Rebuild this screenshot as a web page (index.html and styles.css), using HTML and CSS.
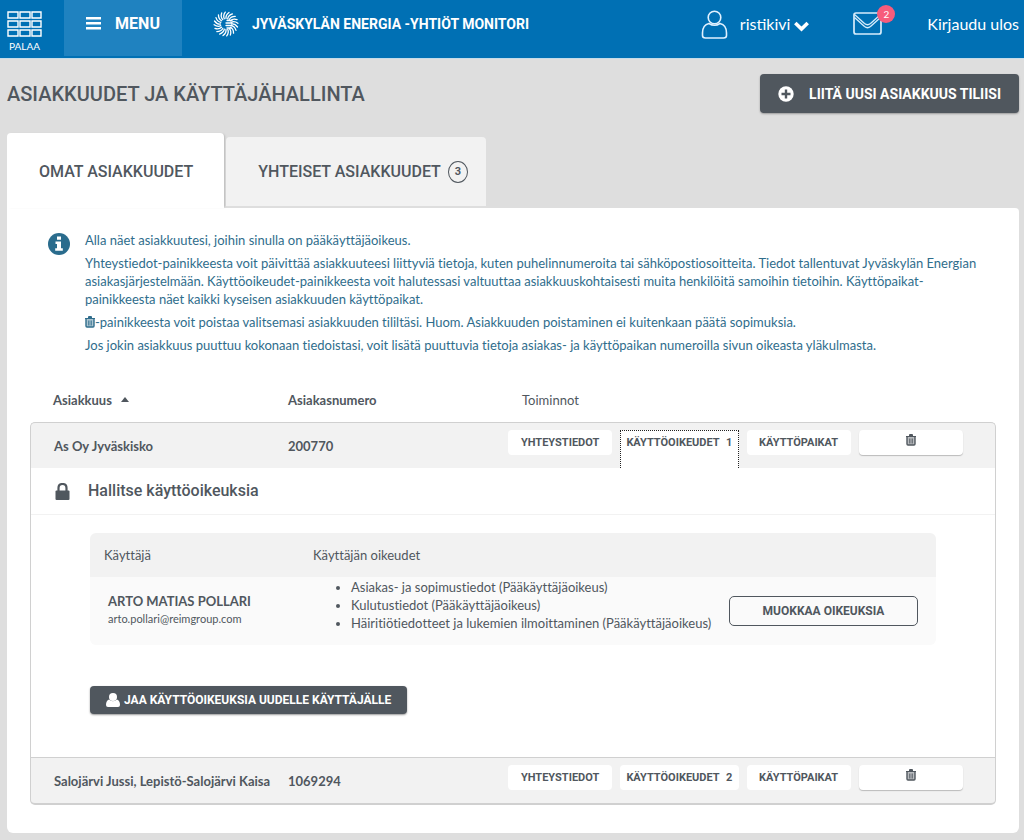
FILE: index.html
```html
<!DOCTYPE html>
<html lang="fi">
<head>
<meta charset="utf-8">
<meta name="viewport" content="width=device-width, initial-scale=1">
<title>Asiakkuudet ja käyttäjähallinta</title>
<link rel="stylesheet" href="styles.css">
</head>
<body>
<svg class="symbols" aria-hidden="true">
  <symbol id="trash" viewBox="0 0 10 12">
    <path d="M0 2h3V1q0-1 1-1h2q1 0 1 1v1h3v1H0z" fill="currentColor"/>
    <path d="M1 3v7q0 1 1 1h6q1 0 1-1V3" fill="currentColor" fill-opacity=".4" stroke="currentColor" stroke-width="1.4"/>
    <path d="M3.5 4.500v5M5 4.500v5M6.500 4.500v5" stroke="currentColor" stroke-width=".7"/>
  </symbol>
</svg>

<header class="topbar">
  <a class="back" href="#">
    <svg width="36" height="27" viewBox="0 0 36 27" fill="none" stroke="#fff" stroke-width="1.4" aria-hidden="true">
      <path d="M1 1h10v6H1zM13 1h10v6H13zM25 1h9v6h-9zM1 10h10v6H1zM13 10h10v6H13zM25 10h9v6h-9zM1 19h10v6H1zM13 19h10v6H13zM25 19h9v6h-9z"/>
    </svg>
    <span>PALAA</span>
  </a>
  <button class="menu" type="button">
    <svg width="15" height="13" viewBox="0 0 15 13" fill="#fff" aria-hidden="true"><path d="M0 0h15v2.500H0zM0 5h15v2.500H0zM0 10h15v2.500H0z"/></svg>
    MENU
  </button>
  <div class="brand">
    <svg width="26" height="26" viewBox="-13 -13 26 26" fill="none" stroke="#fff" stroke-width="1.300" stroke-linecap="round" aria-hidden="true">
      <defs>
        <path id="ray" d="M0-5.500Q-.5-9 3-11.500"/>
        <g id="quarter">
          <use href="#ray"/><use href="#ray" transform="rotate(18)"/><use href="#ray" transform="rotate(36)"/><use href="#ray" transform="rotate(54)"/><use href="#ray" transform="rotate(72)"/>
        </g>
      </defs>
      <use href="#quarter"/><use href="#quarter" transform="rotate(90)"/><use href="#quarter" transform="rotate(180)"/><use href="#quarter" transform="rotate(270)"/>
      <path d="M1-3.500h5M0-1h6M0 1.500h6M1 4h4"/>
    </svg>
    <span>JYVÄSKYLÄN ENERGIA -YHTIÖT MONITORI</span>
  </div>
  <nav class="account">
    <button class="user" type="button">
      <svg width="27" height="29" viewBox="0 0 27 29" fill="none" stroke="#e0f1ff" stroke-width="1.600" aria-hidden="true">
        <circle cx="13.500" cy="7.500" r="6.300"/>
        <path d="M8 13.500Q1.500 15 1.500 23v2.500q0 2.500 3 2.500h18q3 0 3-2.500V23q0-8-6.500-9.500Q13.500 17 8 13.500z"/>
      </svg>
      <span>ristikivi</span>
      <svg class="chevron" width="15" height="11" viewBox="0 0 15 11" fill="none" stroke="#fff" stroke-width="3.600" aria-hidden="true"><path d="M1.300 2l6.200 6 6.200-6"/></svg>
    </button>
    <a class="mail" href="#" aria-label="Viestit">
      <svg width="30" height="24" viewBox="0 0 30 24" fill="none" stroke="#d6ecfb" stroke-width="1.700" stroke-linejoin="round" aria-hidden="true">
        <rect x="1" y="1" width="27" height="21" rx="2"/>
        <path d="M1.500 2.500l10 9q3 2.500 6 0l10-9M1.500 5.500l10 9q3 2.500 6 0l10-9" stroke-width="1.300"/>
      </svg>
      <span class="badge">2</span>
    </a>
    <a class="logout" href="#">Kirjaudu ulos</a>
  </nav>
</header>

<main>
  <div class="titlebar">
    <h1>ASIAKKUUDET JA KÄYTTÄJÄHALLINTA</h1>
    <button class="dark add" type="button">
      <svg width="16" height="16" viewBox="0 0 16 16" aria-hidden="true"><circle cx="8" cy="8" r="7.700" fill="#fff"/><path d="M8 3.500v9M3.500 8h9" stroke="#50575e" stroke-width="2.400"/></svg>
      LIITÄ UUSI ASIAKKUUS TILIISI
    </button>
  </div>

  <div class="tabs" role="tablist">
    <button class="tab selected" type="button" role="tab" aria-selected="true">OMAT ASIAKKUUDET</button>
    <button class="tab" type="button" role="tab" aria-selected="false">YHTEISET ASIAKKUUDET <span class="count">3</span></button>
  </div>

  <section class="panel">
    <div class="info">
      <svg width="22" height="22" viewBox="0 0 22 22" aria-hidden="true"><circle cx="11" cy="11" r="11" fill="#2a6c8d"/><path d="M9 3.500h4v3.200H9zM7.500 8.500H13v6.700h1.800v2.600H7.200v-2.600H9v-4.100H7.500z" fill="#fff"/></svg>
      <div class="info-text">
        <p>Alla näet asiakkuutesi, joihin sinulla on pääkäyttäjäoikeus.</p>
        <p>Yhteystiedot-painikkeesta voit päivittää asiakkuuteesi liittyviä tietoja, kuten puhelinnumeroita tai sähköpostiosoitteita. Tiedot tallentuvat Jyväskylän Energian asiakasjärjestelmään. Käyttöoikeudet-painikkeesta voit halutessasi valtuuttaa asiakkuuskohtaisesti muita henkilöitä samoihin tietoihin. Käyttöpaikat-painikkeesta näet kaikki kyseisen asiakkuuden käyttöpaikat.</p>
        <p><svg class="trash" aria-hidden="true"><use href="#trash"/></svg>-painikkeesta voit poistaa valitsemasi asiakkuuden tililtäsi. Huom. Asiakkuuden poistaminen ei kuitenkaan päätä sopimuksia.</p>
        <p>Jos jokin asiakkuus puuttuu kokonaan tiedoistasi, voit lisätä puuttuvia tietoja asiakas- ja käyttöpaikan numeroilla sivun oikeasta yläkulmasta.</p>
      </div>
    </div>

    <table class="customers">
      <thead>
        <tr>
          <th class="name" scope="col">Asiakkuus <svg class="sort" width="8" height="5" viewBox="0 0 8 5" aria-hidden="true"><path d="M4 0l4 5H0z" fill="#50575e"/></svg></th>
          <th class="number" scope="col">Asiakasnumero</th>
          <th class="tools" scope="col">Toiminnot</th>
        </tr>
      </thead>
      <tbody>
        <tr class="customer">
          <td>As Oy Jyväskisko</td>
          <td>200770</td>
          <td class="tools">
            <div class="actions">
              <button type="button">YHTEYSTIEDOT</button>
              <button class="open" type="button" aria-expanded="true">KÄYTTÖOIKEUDET <span>1</span></button>
              <button type="button">KÄYTTÖPAIKAT</button>
              <button class="remove" type="button" aria-label="Poista"><svg class="trash" aria-hidden="true"><use href="#trash"/></svg></button>
            </div>
          </td>
        </tr>
        <tr class="detail">
          <td colspan="3">
            <h2>
              <svg width="15" height="17" viewBox="0 0 15 17" aria-hidden="true"><path d="M3.500 8V5q0-4 4-4t4 4v3" fill="none" stroke="#50575e" stroke-width="2.200"/><rect y="7.500" x=".5" width="14" height="9.500" rx="1" fill="#50575e"/></svg>
              Hallitse käyttöoikeuksia
            </h2>
            <div class="rights">
              <table class="users">
                <thead>
                  <tr><th class="who" scope="col">Käyttäjä</th><th scope="col">Käyttäjän oikeudet</th><td class="edit"></td></tr>
                </thead>
                <tbody>
                  <tr>
                    <td class="who"><strong>ARTO MATIAS POLLARI</strong><small>arto.pollari@reimgroup.com</small></td>
                    <td class="list">
                      <ul>
                        <li>Asiakas- ja sopimustiedot (Pääkäyttäjäoikeus)</li>
                        <li>Kulutustiedot (Pääkäyttäjäoikeus)</li>
                        <li>Häiritiötiedotteet ja lukemien ilmoittaminen (Pääkäyttäjäoikeus)</li>
                      </ul>
                    </td>
                    <td class="edit"><button class="outline" type="button">MUOKKAA OIKEUKSIA</button></td>
                  </tr>
                </tbody>
              </table>
              <button class="dark share" type="button">
                <svg width="14" height="14" viewBox="0 0 14 14" fill="#fff" aria-hidden="true"><circle cx="7" cy="4" r="4"/><path d="M3 6.500Q0 7.500 0 12q0 2 2 2h10q2 0 2-2 0-4.500-3-5.500-4 3.500-8 0z"/></svg>
                JAA KÄYTTÖOIKEUKSIA UUDELLE KÄYTTÄJÄLLE
              </button>
            </div>
          </td>
        </tr>
        <tr class="customer last">
          <td>Salojärvi Jussi, Lepistö-Salojärvi Kaisa</td>
          <td>1069294</td>
          <td class="tools">
            <div class="actions">
              <button type="button">YHTEYSTIEDOT</button>
              <button type="button" aria-expanded="false">KÄYTTÖOIKEUDET <span>2</span></button>
              <button type="button">KÄYTTÖPAIKAT</button>
              <button class="remove" type="button" aria-label="Poista"><svg class="trash" aria-hidden="true"><use href="#trash"/></svg></button>
            </div>
          </td>
        </tr>
      </tbody>
    </table>
  </section>
</main>
</body>
</html>
```
FILE: styles.css
```css
* { box-sizing: border-box; }

body {
  margin: 0;
  background: #dedede;
  color: #50575e;
  font: 13px/18px Lato, "Open Sans", sans-serif;
  font-variant-ligatures: none;
}

button {
  margin: 0;
  padding: 0;
  border: 0;
  background: none;
  color: inherit;
  font: bold 12px/18px Roboto, sans-serif;
  white-space: nowrap;
  cursor: pointer;
}

a { color: inherit; text-decoration: none; }
h1, h2, p, ul { margin: 0; }
svg { flex: none; }
.symbols { position: absolute; width: 0; height: 0; }
.trash { width: 10px; height: 12px; }

/* Top bar */
.topbar {
  display: flex;
  height: 59px;
  background: #0070b4;
  border-bottom: 1px solid #c4dcea;
  color: #fff;
}
.back {
  display: flex;
  flex-direction: column;
  align-items: center;
  width: 49px;
  margin-right: 15px;
  padding-top: 11px;
  font-size: 10px;
  line-height: 16px;
}
.menu {
  display: flex;
  align-items: center;
  justify-content: center;
  gap: 14px;
  width: 118px;
  height: 56px;
  padding-bottom: 9px;
  background: #1f82c0;
  font-size: 16px;
}
.brand {
  display: flex;
  align-items: center;
  gap: 13px;
  height: 47px;
  margin-left: 31px;
  font: bold 14px/18px Roboto, sans-serif;
  white-space: nowrap;
}
.account {
  display: flex;
  align-items: center;
  height: 48px;
  margin-left: auto;
  padding-right: 5px;
  font-size: 16px;
}
.user {
  display: flex;
  align-items: center;
  gap: 12px;
  font: 16px/20px Lato, sans-serif;
}
.user .chevron { margin: 4px 0 0 -8px; }
.mail { position: relative; height: 24px; margin: 0 44px; }
.mail svg { display: block; }
.badge {
  position: absolute;
  top: -7px;
  right: -12px;
  width: 18px;
  height: 18px;
  border-radius: 50%;
  background: #f75c7c;
  font-size: 10px;
  line-height: 18px;
  text-align: center;
}

/* Title and tabs */
main { padding: 15px 5px 7px 7px; }
.titlebar {
  display: flex;
  align-items: center;
  justify-content: space-between;
}
h1 { font: 500 20px/24px Roboto, sans-serif; }
.dark {
  display: inline-flex;
  align-items: center;
  border-radius: 4px;
  background: #50575e;
  box-shadow: 0 1px 2px #9a9a9a;
  color: #fff;
}
.add {
  gap: 15px;
  height: 39px;
  padding: 0 18px;
  font-size: 14px;
}
.tabs {
  display: flex;
  align-items: flex-end;
  margin-top: 20px;
}
.tab {
  display: flex;
  align-items: center;
  gap: 7px;
  height: 69px;
  margin-bottom: 2px;
  padding: 0 18px 0 32px;
  border-radius: 4px 4px 0 0;
  background: #f2f2f2;
  font-size: 16px;
  font-weight: 500;
}
.tab.selected {
  height: 75px;
  margin: 0 2px 0 0;
  padding: 2px 31px 0 32px;
  background: #fff;
  box-shadow: 2px 0 2px -1px #bbb;
}
.count {
  width: 20px;
  height: 22px;
  border: 1px solid #50575e;
  border-radius: 50%;
  font-size: 11px;
  font-weight: bold;
  line-height: 20px;
}
.panel {
  padding: 23px 23px 28px;
  border-radius: 0 4px 6px 6px;
  background: #fff;
}

/* Instructions */
.info {
  display: flex;
  gap: 15px;
  padding: 0 8px 0 18px;
  color: #2f6d8c;
}
.info > svg { margin-top: 2px; }
.info p { margin-bottom: 5px; }
.info .trash { vertical-align: -1px; }

/* Customer table */
table { width: 100%; border-spacing: 0; }
th { text-align: left; }
td { padding: 0; }
.customers { margin-top: 18px; table-layout: fixed; }
.customers .name { width: 235px; }
.customers .number { width: 229px; }
.customers > thead th { height: 45px; padding: 0 0 0 23px; }
.customers > thead .tools { padding-left: 28px; font-weight: normal; }
.sort { margin: 0 0 3px 6px; }
.customer td {
  height: 46px;
  padding: 0 0 0 23px;
  border-top: 1px solid #d0d0d0;
  background: #f2f2f2;
  font-weight: bold;
  white-space: nowrap;
}
.customer td:first-child { border-left: 1px solid #d0d0d0; }
.customer td:last-child { border-right: 1px solid #d0d0d0; }
.customer:first-child td:first-child { border-top-left-radius: 5px; }
.customer:first-child td:last-child { border-top-right-radius: 5px; }
.last td { height: 48px; border-bottom: 2px solid #d0d0d0; }
.last td:first-child { border-bottom-left-radius: 5px; }
.last td:last-child { border-bottom-right-radius: 5px; }
.customer .tools { padding: 7px 32px 0 14px; vertical-align: top; }
.actions {
  display: grid;
  grid-template-columns: 104fr 118fr 104fr 104fr;
  align-items: start;
  gap: 8px;
}
.actions button {
  height: 25px;
  border-radius: 4px;
  background: #fff;
  font-size: 11px;
}
.actions span { margin-left: 4px; }
.actions .open {
  height: 38px;
  padding-bottom: 14px;
  border: 1px dotted #222;
  border-bottom: 0;
  border-radius: 0;
}
.actions .remove { box-shadow: 0 1px 1px #bbb; }

/* Access rights */
.detail > td { border: solid #d0d0d0; border-width: 0 1px; }
h2 {
  display: flex;
  align-items: center;
  gap: 18px;
  height: 47px;
  padding-left: 24px;
  border-bottom: 1px solid #f2f2f2;
  font: 500 16px/20px Roboto, sans-serif;
}
.rights { padding: 18px 59px 43px; }
.users th, .users thead td {
  height: 44px;
  background: #f2f2f2;
  font-weight: normal;
}
.users th.who { padding-left: 14px; }
.users .who { width: 222px; }
.users th:first-child { border-top-left-radius: 6px; }
.users thead td { border-top-right-radius: 6px; }
.users tbody td { height: 68px; background: #fafafa; }
.users tbody td:first-child { padding: 0 0 2px 18px; border-bottom-left-radius: 6px; }
.users tbody td:last-child { border-bottom-right-radius: 6px; }
.users strong, .users small { display: block; }
.users small { font-size: 11px; }
.users .list { padding-top: 1px; vertical-align: top; }
.users ul { padding-left: 39px; }
.users .edit { width: 207px; padding-right: 18px; }
.outline {
  width: 100%;
  height: 30px;
  border: 1px solid #50575e;
  border-radius: 5px;
}
.share {
  gap: 4px;
  height: 28px;
  margin-top: 41px;
  padding: 0 16px;
}
```
